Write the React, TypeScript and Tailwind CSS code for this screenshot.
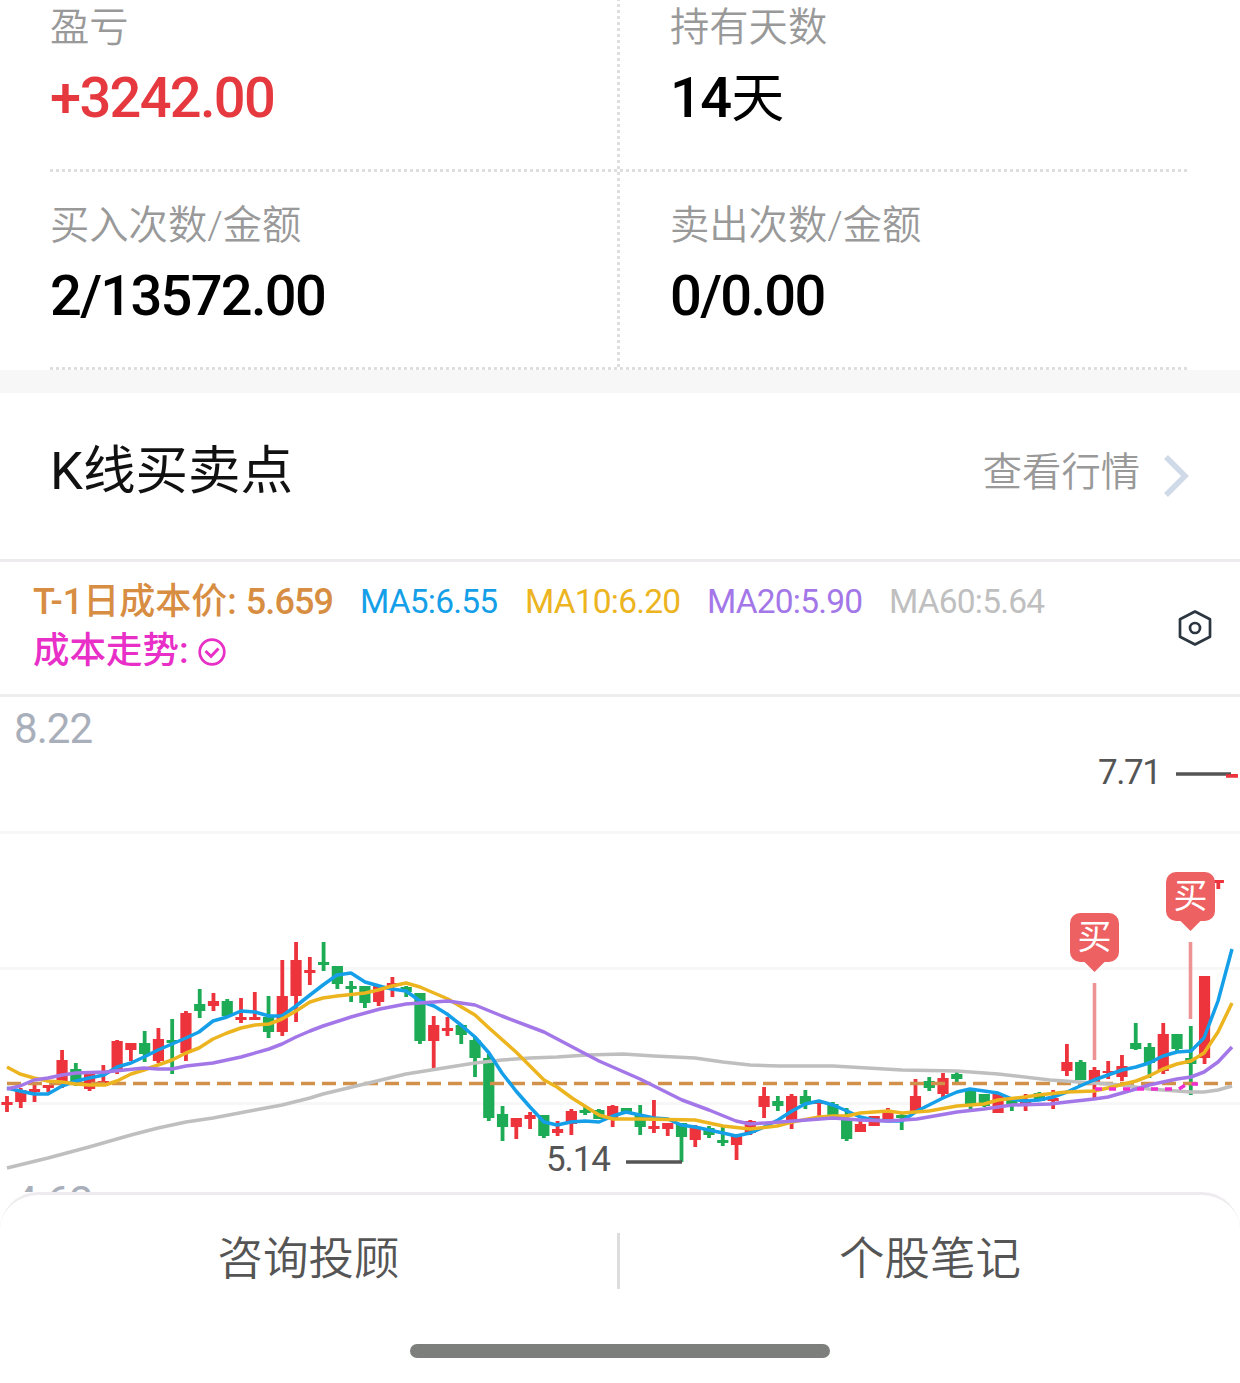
import React from 'react';

type Candle = [top: number, bottom: number, high: number, low: number, up: 0 | 1];
type Point = [x: number, y: number];

const STEP = 13.765;
const CHART_TOP = 697;

const candles: Candle[] = [
  [1102, 1105, 1096, 1112, 1], [1090, 1102, 1088, 1108, 1], [1089, 1092, 1085, 1102, 1], [1085, 1088, 1085, 1092, 1],
  [1060, 1084, 1050, 1088, 1], [1069, 1083, 1063, 1086, 0], [1074, 1089, 1073, 1091, 1], [1081, 1084, 1065, 1084, 1],
  [1041, 1069, 1040, 1074, 1], [1043, 1050, 1043, 1061, 1], [1043, 1054, 1031, 1062, 0], [1039, 1061, 1028, 1063, 1],
  [1040, 1043, 1019, 1074, 0], [1013, 1053, 1011, 1061, 1], [1004, 1011, 989, 1018, 0], [1001, 1006, 993, 1011, 1],
  [1001, 1016, 999, 1018, 0], [1017, 1020, 998, 1023, 1], [1017, 1020, 992, 1020, 1], [1017, 1032, 996, 1038, 0],
  [996, 1032, 960, 1036, 1], [960, 996, 942, 1022, 1], [970, 973, 957, 985, 1], [962, 965, 942, 971, 0],
  [966, 984, 966, 989, 0], [986, 989, 981, 1002, 0], [986, 1003, 986, 1008, 0], [986, 1002, 986, 1006, 1],
  [983, 986, 977, 997, 1], [987, 992, 986, 997, 0], [993, 1041, 993, 1044, 0], [1025, 1041, 1016, 1068, 1],
  [1028, 1031, 1017, 1036, 1], [1025, 1035, 1024, 1044, 0], [1040, 1058, 1037, 1077, 0], [1058, 1118, 1054, 1121, 0],
  [1114, 1127, 1106, 1141, 0], [1118, 1127, 1118, 1139, 1], [1115, 1119, 1112, 1129, 1], [1115, 1136, 1115, 1138, 0],
  [1129, 1133, 1121, 1136, 1], [1111, 1124, 1109, 1135, 1], [1110, 1113, 1107, 1115, 0], [1110, 1119, 1109, 1119, 0],
  [1106, 1118, 1105, 1127, 1], [1108, 1112, 1108, 1113, 0], [1115, 1127, 1105, 1135, 0], [1126, 1129, 1100, 1133, 1],
  [1123, 1129, 1123, 1136, 1], [1123, 1137, 1123, 1162, 0], [1127, 1140, 1125, 1147, 1], [1128, 1135, 1126, 1138, 0],
  [1140, 1143, 1126, 1146, 0], [1134, 1145, 1134, 1160, 1], [1121, 1133, 1120, 1135, 1], [1096, 1107, 1087, 1118, 1],
  [1101, 1106, 1096, 1111, 0], [1096, 1120, 1094, 1129, 1], [1096, 1104, 1090, 1109, 0], [1101, 1104, 1101, 1117, 1],
  [1104, 1117, 1102, 1117, 0], [1120, 1139, 1108, 1141, 0], [1124, 1132, 1121, 1132, 1], [1116, 1126, 1116, 1126, 1],
  [1111, 1119, 1108, 1119, 1], [1115, 1118, 1114, 1130, 0], [1096, 1111, 1079, 1111, 1], [1081, 1088, 1077, 1091, 0],
  [1078, 1094, 1073, 1097, 1], [1074, 1079, 1071, 1082, 0], [1090, 1105, 1090, 1109, 0], [1094, 1106, 1094, 1107, 0],
  [1094, 1113, 1094, 1113, 1], [1099, 1106, 1098, 1111, 0], [1101, 1104, 1094, 1111, 1], [1093, 1101, 1092, 1101, 0],
  [1098, 1101, 1090, 1109, 1], [1062, 1071, 1044, 1076, 1], [1062, 1080, 1060, 1080, 0], [1070, 1083, 1067, 1098, 1],
  [1071, 1073, 1061, 1079, 1], [1066, 1077, 1055, 1081, 1], [1043, 1049, 1023, 1050, 0], [1047, 1063, 1043, 1078, 0],
  [1034, 1071, 1023, 1074, 1], [1034, 1049, 1034, 1051, 0], [1058, 1064, 1026, 1095, 0], [976, 1058, 976, 1064, 1],
  [880, 883, 880, 889, 1], [774, 777, 774, 777, 1],
];

const ma5: Point[] = [
  [7, 1088], [20, 1091], [34, 1094], [48, 1094], [62, 1086], [76, 1081], [89, 1078], [104, 1075], [117, 1067], [131, 1063],
  [144, 1057], [158, 1050], [172, 1044], [186, 1038], [199, 1032], [213, 1021], [227, 1017], [241, 1011], [255, 1012],
  [269, 1016], [282, 1016], [296, 1006], [310, 995], [323, 985], [337, 975], [351, 973], [365, 982], [383, 987], [392, 989],
  [406, 991], [420, 1001], [434, 1006], [447, 1014], [461, 1025], [475, 1037], [489, 1053], [502, 1073], [516, 1091],
  [530, 1107], [544, 1122], [557, 1125], [571, 1122], [585, 1121], [599, 1122], [613, 1116], [626, 1112], [640, 1115],
  [654, 1118], [668, 1119], [681, 1125], [695, 1127], [709, 1130], [723, 1133], [736, 1136], [750, 1133], [764, 1127],
  [778, 1120], [792, 1111], [805, 1104], [819, 1101], [833, 1105], [847, 1111], [860, 1117], [874, 1120], [888, 1121],
  [902, 1121], [917, 1111], [929, 1105], [943, 1098], [957, 1092], [970, 1089], [984, 1091], [998, 1093], [1012, 1099],
  [1025, 1101], [1039, 1100], [1053, 1097], [1067, 1092], [1080, 1086], [1094, 1080], [1108, 1075], [1122, 1070],
  [1136, 1067], [1149, 1063], [1163, 1056], [1177, 1052], [1191, 1051], [1204, 1038], [1218, 1001], [1232, 949],
];

const ma10: Point[] = [
  [7, 1067], [20, 1074], [34, 1078], [48, 1081], [62, 1082], [76, 1084], [89, 1085], [105, 1085], [117, 1081], [131, 1074],
  [144, 1070], [158, 1065], [172, 1060], [186, 1053], [199, 1048], [213, 1039], [227, 1033], [241, 1028], [255, 1025],
  [269, 1024], [282, 1019], [296, 1011], [310, 1002], [323, 998], [337, 996], [365, 993], [378, 990], [392, 986], [406, 983],
  [420, 987], [448, 999], [475, 1015], [489, 1028], [516, 1052], [544, 1080], [557, 1087], [572, 1098], [599, 1115],
  [613, 1119], [640, 1119], [695, 1120], [723, 1126], [750, 1129], [777, 1126], [792, 1122], [819, 1117], [833, 1116],
  [847, 1116], [860, 1113], [888, 1111], [902, 1113], [929, 1111], [957, 1106], [984, 1104], [998, 1100], [1025, 1097],
  [1038, 1095], [1067, 1092], [1094, 1091], [1108, 1088], [1136, 1081], [1149, 1076], [1163, 1069], [1177, 1064],
  [1191, 1061], [1204, 1053], [1218, 1032], [1232, 1003],
];

const ma20: Point[] = [
  [7, 1089], [20, 1086], [34, 1080], [48, 1078], [62, 1075], [76, 1073], [105, 1072], [144, 1068], [158, 1069], [172, 1069],
  [186, 1066], [213, 1063], [241, 1057], [269, 1049], [282, 1044], [296, 1037], [310, 1031], [323, 1026], [351, 1017],
  [380, 1009], [406, 1004], [434, 1002], [448, 1001], [461, 1003], [475, 1005], [502, 1016], [544, 1032], [580, 1051],
  [599, 1061], [640, 1079], [682, 1100], [709, 1110], [736, 1121], [750, 1124], [780, 1122], [807, 1120], [833, 1118],
  [860, 1120], [888, 1121], [917, 1119], [957, 1112], [984, 1109], [1012, 1105], [1050, 1104], [1067, 1102], [1094, 1099],
  [1108, 1097], [1136, 1089], [1149, 1085], [1163, 1082], [1177, 1079], [1191, 1077], [1204, 1072], [1218, 1062], [1232, 1047],
];

const ma60: Point[] = [
  [7, 1168], [48, 1158], [89, 1147], [131, 1135], [158, 1128], [186, 1122], [213, 1118], [255, 1110], [282, 1105], [310, 1098],
  [323, 1094], [406, 1074], [475, 1063], [502, 1060], [530, 1058], [557, 1057], [587, 1055], [623, 1054], [654, 1056],
  [695, 1058], [723, 1062], [750, 1065], [780, 1066], [833, 1066], [902, 1070], [957, 1071], [998, 1074], [1050, 1080],
  [1094, 1083], [1122, 1085], [1149, 1089], [1191, 1092], [1204, 1092], [1218, 1090], [1232, 1086],
];

const toPoints = (pts: Point[]) => pts.map((p) => p.join(',')).join(' ');

const stats = [
  { label: '盈亏', value: '+3242.00', color: 'text-[#e5393f]' },
  { label: '持有天数', value: '14', unit: '天', color: 'text-black' },
  { label: '买入次数/金额', value: '2/13572.00', color: 'text-black' },
  { label: '卖出次数/金额', value: '0/0.00', color: 'text-black' },
];

function Stat({ label, value, unit, color }: { label: string; value: string; unit?: string; color: string }) {
  return (
    <div className="h-[195px] pt-[27px]">
      <div className="h-[54px] text-[39.3px] leading-[54px] font-[350] text-[#999]">{label}</div>
      <div className={`mt-[8px] h-[70px] text-[56px] leading-[70px] font-medium tracking-[-1.7px] ${color}`}>
        {value}
        {unit && <span className="ml-[1px] text-[53px] font-normal">{unit}</span>}
      </div>
    </div>
  );
}

function DottedRow() {
  return <div className="h-[3px] bg-[repeating-linear-gradient(to_right,#dedede_0_3px,transparent_3px_6px)]"></div>;
}

function DottedColumn() {
  return <div className="w-[3px] bg-[repeating-linear-gradient(to_bottom,#dedede_0_3px,transparent_3px_6px)]"></div>;
}

function StatRow({ items }: { items: typeof stats }) {
  return (
    <>
      <div className="flex h-[195px]">
        <div className="w-[567px]"><Stat {...items[0]} /></div>
        <DottedColumn />
        <div className="flex-1 pl-[50px]"><Stat {...items[1]} /></div>
      </div>
      <DottedRow />
    </>
  );
}

function BuyMarker({ x, y }: { x: number; y: number }) {
  return (
    <g>
      <rect x={x - 24.5} y={y} width="49" height="49" rx="10" fill="#ee6163" />
      <path d={`M${x - 11} ${y + 48} L${x} ${y + 59} L${x + 11} ${y + 48} Z`} fill="#ee6163" />
      <text x={x} y={y + 36} textAnchor="middle" fontSize="34" fontWeight="400" fill="#fff">买</text>
      <line x1={x} x2={x} y1={y + 70} y2={y + 147} stroke="#ee9394" strokeWidth="3.6" />
    </g>
  );
}

function KLineChart() {
  return (
    <svg className="block" width="1240" height="495" viewBox={`0 ${CHART_TOP} 1240 495`}>
      {[832, 968, 1103].map((y) => (
        <line key={y} x1="0" x2="1240" y1={y + 0.5} y2={y + 0.5} stroke="#f7f7f8" strokeWidth="3" />
      ))}
      {candles.map(([top, bottom, high, low, up], i) => {
        const x = 7 + i * STEP;
        const color = up ? '#ed333b' : '#1dab55';
        return (
          <g key={i} fill={color}>
            <rect x={x - 1.9} y={high} width="3.8" height={low - high} />
            <rect x={x - 5.6} y={top} width="11.2" height={bottom - top} />
          </g>
        );
      })}
      <g fill="none" strokeWidth="3.5" strokeLinejoin="round">
        <line x1="7" x2="1232" y1="1083.5" y2="1083.5" stroke="#d2914a" strokeDasharray="14 7" />
        <polyline points={toPoints(ma60)} stroke="#bfbfbf" />
        <polyline points={toPoints(ma5)} stroke="#149fe8" />
        <polyline points={toPoints(ma10)} stroke="#ecb41f" />
        <polyline points={toPoints(ma20)} stroke="#a377e8" />
        <polyline points="1095,1089 1179,1089 1187,1084 1198,1084" stroke="#f02fd0" strokeDasharray="7 7" />
      </g>
      <BuyMarker x={1094.5} y={913} />
      <BuyMarker x={1190.5} y={872} />

      {/* Highest and lowest price callouts */}
      <g stroke="#555" strokeWidth="3.5">
        <line x1="1176" x2="1231" y1="774" y2="774" />
        <line x1="626" x2="682" y1="1162" y2="1162" />
      </g>
      <line x1="1226" x2="1238" y1="776" y2="776" stroke="#ed333b" strokeWidth="3.5" />
      <g fill="#555" fontSize="35">
        <text x="1098" y="784" textLength="64">7.71</text>
        <text x="546" y="1171" textLength="65">5.14</text>
      </g>
      <g fill="#a9afba" fontSize="42">
        <text x="14" y="743" textLength="79">8.22</text>
        <text x="14" y="1216" textLength="79">4.62</text>
      </g>
    </svg>
  );
}

export default function App() {
  return (
    <div className="flex h-[1383px] w-[1240px] flex-col overflow-hidden bg-white font-[Roboto,'Noto_Sans_CJK_SC',sans-serif]">
      <section className="-mt-[26px] flex-none px-[50px]">
        <StatRow items={stats.slice(0, 2)} />
        <StatRow items={stats.slice(2)} />
      </section>
      <div className="h-[23px] flex-none bg-[#f7f7f7]"></div>

      <header className="flex h-[169px] flex-none items-center justify-between border-b-[3px] border-[#eeebee] pr-[51px] pb-[10px] pl-[50px]">
        <h2 className="text-[52.5px] leading-[60px] text-[#111]">K线买卖点</h2>
        <div className="flex items-center">
          <span className="mt-[4px] text-[39.3px] leading-[54px] font-[350] text-[#999]">查看行情</span>
          <svg className="mt-[10px] ml-[23px]" width="26" height="44" viewBox="0 0 26 44" fill="none">
            <path d="M3 3 L22 22 L3 41" stroke="#cfd9e8" strokeWidth="5.5" />
          </svg>
        </div>
      </header>

      <div className="flex h-[135px] flex-none items-start justify-between border-b-[3px] border-[#eeeeee] pr-[26px] pl-[33px]">
        <div className="pt-[15px]">
          <div className="flex h-[49px] items-center text-[33.5px] leading-[49px] tracking-[-0.8px]">
            <span className="mt-[2px] w-[327px] text-[36px] font-medium tracking-normal text-[#d78d42]">
              T-1日成本价: <span className="tracking-[-0.9px]">5.659</span>
            </span>
            <span className="w-[165px] text-[#149fe8]">MA5:6.55</span>
            <span className="w-[182px] text-[#ecb41f]">MA10:6.20</span>
            <span className="w-[182px] text-[#a377e8]">MA20:5.90</span>
            <span className="text-[#bfbfbf]">MA60:5.64</span>
          </div>
          <div className="flex h-[49px] items-center text-[36.5px] leading-[49px] font-medium text-[#e82fc8]">
            <span>成本走势:</span>
            <svg className="mt-[3px] ml-[9px]" width="28" height="28" viewBox="0 0 28 28" fill="none" stroke="currentColor" strokeWidth="2.7">
              <circle cx="14" cy="14" r="12.3" />
              <path d="M7.5 13 L13 18.3 L20.5 10.5" strokeWidth="3" />
            </svg>
          </div>
        </div>
        <svg className="mt-[47px]" width="38" height="38" viewBox="0 0 38 38" fill="none" stroke="#2b3640" strokeWidth="2.7" strokeLinejoin="round">
          <path d="M19 2.5 L34 10.3 V27.7 L19 35.5 L4 27.7 V10.3 Z" />
          <circle cx="19" cy="19" r="5" />
        </svg>
      </div>

      <div className="h-[495px] flex-none">
        <KLineChart />
      </div>

      <footer className="relative h-[192px] flex-none rounded-t-[38px] border-t-[3px] border-[#eeebee] bg-white">
        <div className="flex h-[130px] items-center text-[45.5px] leading-[60px] font-[350] text-[#555]">
          <button className="w-[617px] text-center">咨询投顾</button>
          <div className="mt-[2px] h-[56px] w-[3px] bg-[#dddddd]"></div>
          <button className="flex-1 text-center">个股笔记</button>
        </div>
        <div className="mx-auto mt-[19px] h-[14px] w-[420px] rounded-full bg-[#7c7f7c]"></div>
      </footer>
    </div>
  );
}
